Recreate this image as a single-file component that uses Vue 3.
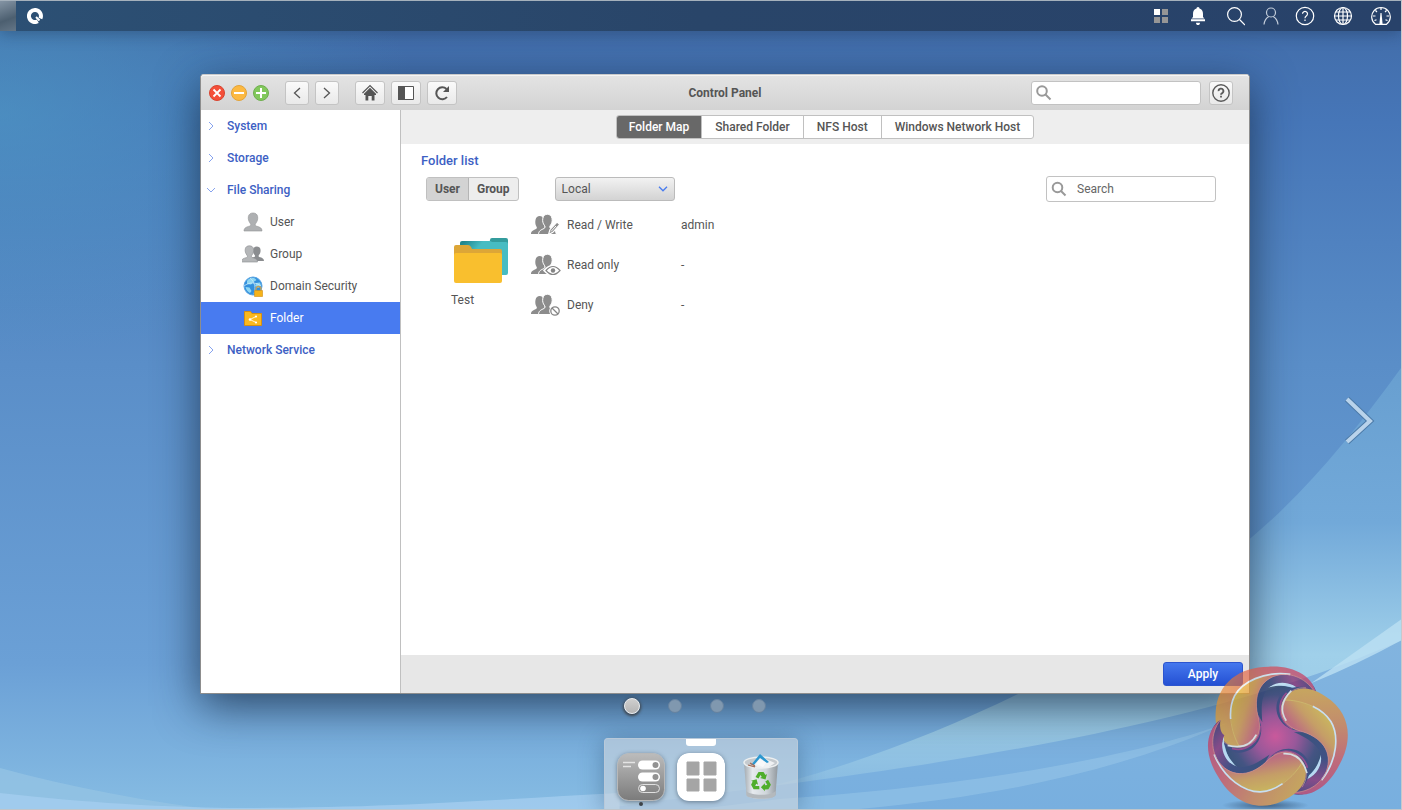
<template>
  <div class="desktop">
    <svg class="wallpaper" viewBox="0 0 1402 810" preserveAspectRatio="none" aria-hidden="true">
      <defs>
        <linearGradient id="sky" x1="0" y1="0" x2="0" y2="1">
          <stop offset="0" stop-color="#416ba6" />
          <stop offset="0.15" stop-color="#4676b8" />
          <stop offset="0.45" stop-color="#5a8ec8" />
          <stop offset="0.82" stop-color="#6ba0d6" />
          <stop offset="1" stop-color="#86bce3" />
        </linearGradient>
        <radialGradient id="glow" cx="0" cy="0.14" r="0.3">
          <stop offset="0" stop-color="#4f9cc6" stop-opacity="0.6" />
          <stop offset="1" stop-color="#4f9cc6" stop-opacity="0" />
        </radialGradient>
        <linearGradient id="sweep" x1="0" y1="0" x2="0" y2="1">
          <stop offset="0" stop-color="#689fd0" />
          <stop offset="0.35" stop-color="#72a9d9" />
          <stop offset="0.65" stop-color="#a0d0ea" />
          <stop offset="0.8" stop-color="#9bcbe6" />
          <stop offset="1" stop-color="#82b6e0" />
        </linearGradient>
        <linearGradient id="lower" x1="0" y1="0" x2="0" y2="1">
          <stop offset="0" stop-color="#82b4df" />
          <stop offset="1" stop-color="#78afdf" />
        </linearGradient>
      </defs>
      <rect width="1402" height="810" fill="url(#sky)" />
      <rect width="1402" height="810" fill="url(#glow)" />
      <path d="M1402 368C1350 440 1300 500 1240 548C1150 640 950 740 780 785L600 810H1402Z" fill="url(#sweep)" />
      <path d="M1402 641C1300 686 1150 738 780 786L600 810H1402Z" fill="url(#lower)" />
      <path d="M1402 620L1312 684Q1360 664 1402 641Z" fill="#bce0f2" opacity="0.8" />
      <path d="M1230 723C1150 752 1000 785 780 800L700 810H860C1000 797 1120 772 1230 723Z" fill="#a9d4ee" opacity="0.35" />
      <path d="M0 769C70 788 150 803 210 810H0Z" fill="#94c3e4" opacity="0.8" />
      <path d="M0 794C90 804 160 808 230 809C400 809 500 800 620 794V810H0Z" fill="#a4cdef" opacity="0.8" />
    </svg>

    <header class="topbar">
      <button class="show-desktop" aria-label="Show desktop"></button>
      <button class="bar-btn brand" aria-label="Main menu">
        <svg width="16" height="16" viewBox="0 0 16 16">
          <path d="M10.800 13.300A6 6 0 1 1 13.400 10.500" fill="none" stroke="#fff" stroke-width="4" />
          <path d="M9 9l3.500 3.500" stroke="#fff" stroke-width="2" />
        </svg>
      </button>
      <nav class="tray">
        <button class="bar-btn" aria-label="Dashboard">
          <svg width="16" height="16" viewBox="0 0 16 16">
            <path d="M1 1h6v6H1z" fill="#fff" />
            <path d="M9 1h6v6H9zM1 9h6v6H1zM9 9h6v6H9z" fill="#969696" />
          </svg>
        </button>
        <button class="bar-btn" aria-label="Notifications">
          <svg width="22" height="20" viewBox="0 0 22 20">
            <path d="M11 1a1.500 1.500 0 0 1 1.500 1.600C15 3.300 16 5.500 16 8v3l1.500 1.500h-13L6 11V8c0-2.500 1-4.700 3.500-5.400A1.500 1.500 0 0 1 11 1zM4 13.300h14v2H4zM9 16.700h4c0 1.500-.8 2.300-2 2.300s-2-.8-2-2.300z" fill="#fff" />
          </svg>
        </button>
        <button class="bar-btn" aria-label="Search">
          <svg class="line" width="18" height="20" viewBox="0 0 18 20">
            <circle cx="7.500" cy="8.500" r="6.900" />
            <path d="M12.500 13.500l5.500 5.500" />
          </svg>
        </button>
        <button class="bar-btn" aria-label="Account">
          <svg class="line soft" width="16" height="20" viewBox="0 0 16 20">
            <circle cx="8" cy="6.500" r="4.500" />
            <path d="M1 18.500c.5-4 2-6.500 4.800-8M15 18.500c-.5-4-2-6.500-4.800-8" />
          </svg>
        </button>
        <button class="bar-btn" aria-label="Help">
          <svg class="line" width="20" height="20" viewBox="0 0 20 20">
            <circle cx="10" cy="10" r="8.700" />
            <path d="M7.500 7.800a2.500 2.500 0 1 1 3.800 2.200c-.9.600-1.300 1-1.300 2.200M10 13.600V15" />
          </svg>
        </button>
        <button class="bar-btn" aria-label="Language">
          <svg class="line" width="20" height="20" viewBox="0 0 20 20">
            <circle cx="10" cy="10" r="8.500" />
            <ellipse cx="10" cy="10" rx="4.500" ry="8.500" />
            <path d="M10 1.500v17M1.500 10h17M3 6h14M3 14h14" />
          </svg>
        </button>
        <button class="bar-btn" aria-label="Resource monitor">
          <svg class="line" width="20" height="20" viewBox="0 0 20 20">
            <path d="M4.500 18.300a9.300 9.300 0 1 1 11 0zM10 2v2M4.500 4.500L6 6M15.500 4.500L14 6M2 10h2.500M15.500 10H18M3.500 14.500l2-.8M16.500 14.500l-2-.8" />
            <path d="M9.500 7h1l1.100 11H8.400z" fill="#fff" stroke="none" />
          </svg>
        </button>
      </nav>
    </header>

    <main class="stage">
      <section class="window">
        <header class="titlebar">
          <div class="title-left">
            <div class="lights">
              <button class="light" aria-label="Close">
                <svg width="16" height="16" viewBox="0 0 16 16">
                  <circle cx="8" cy="8" r="7.500" fill="#f4503a" stroke="#d84430" />
                  <path d="M4.500 4.500l7 7M11.500 4.500l-7 7" stroke="#fff" stroke-width="1.800" />
                </svg>
              </button>
              <button class="light" aria-label="Minimize">
                <svg width="16" height="16" viewBox="0 0 16 16">
                  <circle cx="8" cy="8" r="7.500" fill="#fcb942" stroke="#e2a33a" />
                  <path d="M3 8h10" stroke="#fff" stroke-width="2" />
                </svg>
              </button>
              <button class="light" aria-label="Maximize">
                <svg width="16" height="16" viewBox="0 0 16 16">
                  <circle cx="8" cy="8" r="7.500" fill="#82c85c" stroke="#6fae4f" />
                  <path d="M3 8h10M8 3v10" stroke="#fff" stroke-width="2" />
                </svg>
              </button>
            </div>
            <div class="tools">
              <button class="tool narrow" aria-label="Back">
                <svg width="16" height="16" viewBox="0 0 16 16"><path d="M11 3L5.500 8l5.500 5" class="chev" /></svg>
              </button>
              <button class="tool narrow" aria-label="Forward">
                <svg width="16" height="16" viewBox="0 0 16 16"><path d="M5 3l5.500 5L5 13" class="chev" /></svg>
              </button>
            </div>
            <div class="tools">
              <button class="tool" aria-label="Home">
                <svg width="18" height="18" viewBox="0 0 18 18">
                  <path d="M1.500 9L9 1.500 16.500 9" fill="none" stroke="#555" stroke-width="1.200" />
                  <path d="M9 3.700l6 6V11h-1.500v5.500h-2.800V12H7.300v4.500H4.500V11H3V9.700z" fill="#555" />
                </svg>
              </button>
              <button class="tool" aria-label="Toggle sidebar">
                <svg width="16" height="14" viewBox="0 0 16 14">
                  <path d="M.5.5h15v13H.5z" fill="#fff" stroke="#555" />
                  <path d="M0 0h7v14H0z" fill="#555" />
                </svg>
              </button>
              <button class="tool" aria-label="Reload">
                <svg width="18" height="18" viewBox="0 0 18 18">
                  <path d="M14 13A6 6 0 1 1 13.500 5" fill="none" stroke="#555" stroke-width="2" />
                  <path d="M16 2v6h-6z" fill="#555" />
                </svg>
              </button>
            </div>
          </div>
          <h1 class="window-title">Control Panel</h1>
          <div class="title-right">
            <label class="search">
              <svg width="16" height="16" viewBox="0 0 16 16"><circle cx="6" cy="6" r="4.800" /><path d="M9.500 9.500l5 5" /></svg>
              <input type="text" aria-label="Search settings" />
            </label>
            <button class="tool narrow" aria-label="Help">
              <svg width="20" height="20" viewBox="0 0 20 20" fill="none" stroke="#5a5a5a">
                <circle cx="10" cy="10" r="8.200" stroke-width="1.400" />
                <path d="M7.600 8.100a2.400 2.400 0 1 1 3.600 2c-.8.400-1.200.8-1.200 1.700M10 12.800v1.700" stroke-width="1.800" />
              </svg>
            </button>
          </div>
        </header>

        <div class="window-body">
          <aside class="sidebar">
            <template v-for="group in menu" :key="group.name">
              <button class="group" @click="group.open = !group.open">
                <svg width="10" height="10" viewBox="0 0 10 10">
                  <path :d="group.open ? 'M1 3l4 4 4-4' : 'M3 1l4 4-4 4'" />
                </svg>
                {{ group.name }}
              </button>
              <template v-if="group.open">
                <a
                  v-for="item in group.items"
                  :key="item.name"
                  href="#"
                  class="item"
                  :class="{ active: item.name === current }"
                  @click.prevent="current = item.name"
                >
                  <svg v-if="item.icon === 'user'" width="22" height="22" viewBox="0 0 22 22">
                    <path :d="person" fill="#aeb0b2" stroke="#929496" stroke-width="0.600" />
                  </svg>
                  <svg v-else-if="item.icon === 'group'" width="22" height="22" viewBox="0 0 22 22">
                    <path :d="person" transform="translate(6 2) scale(.8)" fill="#8b8d90" />
                    <path :d="person" transform="translate(-2.500 1) scale(.9)" fill="#b4b6b8" stroke="#8e9092" stroke-width="0.700" />
                  </svg>
                  <svg v-else-if="item.icon === 'globe'" width="22" height="22" viewBox="0 0 22 22">
                    <circle cx="11" cy="11" r="9" fill="#3390de" stroke="#5aa5e2" />
                    <path d="M5 6c2-3 5-3.500 8-2.500l1.500 1.500-3 2-2.500 2.500-4-.5zM14 8l4-.5 1 3-3 2.500-3-2zM3.500 12l4 .5 2 3.500-1.500 2c-2-1-4-3-4.500-6z" fill="#8fd6f2" />
                    <path d="M2 11c5-4 12-4 17 0M8 3c5 4 6 10 4 16" fill="none" stroke="#d5effa" stroke-width="0.700" />
                    <path d="M14 16v-2a2.500 2.500 0 0 1 5 0v2" fill="none" stroke="#bfa05c" stroke-width="1.300" />
                    <path d="M12.500 15.500h8v6h-8z" fill="#f6b319" stroke="#d18d10" stroke-width="0.600" />
                  </svg>
                  <svg v-else width="22" height="22" viewBox="0 0 22 22">
                    <path d="M2.500 4.500h6l1.500 2h9.500v12h-17z" fill="#fbb81f" stroke="#d58f13" />
                    <path d="M14 9.500l-6 3 6 3" fill="none" stroke="#fff" stroke-width="0.800" />
                    <circle cx="14" cy="9.500" r="1.100" fill="#fff" /><circle cx="8" cy="12.500" r="1.300" fill="#fff" /><circle cx="14" cy="15.500" r="1.100" fill="#fff" />
                  </svg>
                  {{ item.name }}
                </a>
              </template>
            </template>
          </aside>

          <div class="panel">
            <nav class="tabs">
              <div class="tab-group">
                <button v-for="t in tabs" :key="t" class="tab" :class="{ active: t === tab }" @click="tab = t">{{ t }}</button>
              </div>
            </nav>

            <div class="content">
              <h2 class="heading">Folder list</h2>
              <div class="toolbar">
                <div class="toggle">
                  <button :class="{ active: scope === 'User' }" @click="scope = 'User'">User</button>
                  <button :class="{ active: scope === 'Group' }" @click="scope = 'Group'">Group</button>
                </div>
                <div class="select">
                  <select v-model="domain" aria-label="Domain">
                    <option>Local</option>
                  </select>
                  <svg width="10" height="6" viewBox="0 0 10 6"><path d="M1 .8l4 4 4-4" /></svg>
                </div>
                <label class="search filter">
                  <svg width="16" height="16" viewBox="0 0 16 16"><circle cx="6.500" cy="6.500" r="4.800" /><path d="M10 10l4.500 4.500" /></svg>
                  <input type="text" placeholder="Search" aria-label="Search" />
                </label>
              </div>

              <div class="folder-row">
                <figure class="folder">
                  <svg width="56" height="46" viewBox="0 0 56 46">
                    <defs>
                      <linearGradient id="backFolder" x1="0" y1="0" x2="0.800" y2="0.500">
                        <stop offset="0.100" stop-color="#22878f" />
                        <stop offset="0.450" stop-color="#47bcc2" />
                      </linearGradient>
                    </defs>
                    <path d="M37 3q0-2 2-2h14q2 0 2 2v8H35z" fill="#339c9d" />
                    <path d="M7 6q0-2 2-2h27q2 0 3 1h14q2 0 2 2v29q0 2-2 2H9q-2 0-2-2z" fill="url(#backFolder)" />
                    <path d="M1 10q0-2 2-2h12q2 0 3 2l1 2h28q2 0 2 2v12H1z" fill="#dda637" />
                    <path d="M1 18q0-2 2-2h44q2 0 2 2v26q0 2-2 2H3q-2 0-2-2z" fill="#f9bf2e" />
                  </svg>
                  <figcaption>Test</figcaption>
                </figure>
                <table class="rights">
                  <tbody>
                    <tr v-for="r in rights" :key="r.label">
                      <td class="pic">
                        <svg width="30" height="22" viewBox="0 0 30 22">
                          <path d="M0 20c0-3 2-3.500 5-5 1-.5 1.200-1.500.4-2.500C4.300 10.500 4 8 4.600 5.500 5.200 1.800 9 1 11.500 3L15 20z" fill="#8c8c8c" />
                          <path d="M7.500 20.500c.2-4 2.500-4.500 5.500-6 1.200-.6 1.400-2 .5-3-1.600-2-2.200-4.500-1.700-7C12.600-1.200 20.200-1.200 21 4.500c.4 2.500 0 5-1.700 7-.9 1-.7 2.400.5 3 3 1.500 5.200 2 5.400 6z" fill="#8c8c8c" stroke="#fff" />
                          <g v-if="r.icon === 'pen'">
                            <path d="M17.500 20.500l1.500-5 7-7.500 2.800 2.500-7 7.800z" fill="#8c8c8c" stroke="#fff" stroke-width="1.200" />
                            <path d="M20 17.500l5-5.500" stroke="#fff" />
                          </g>
                          <g v-else-if="r.icon === 'eye'">
                            <path d="M14 16.500q7.500-8 15 0q-7.500 8-15 0z" fill="#fff" stroke="#fff" stroke-width="3" />
                            <path d="M15 16.500q7-8 14 0q-7 8-14 0z" fill="#fff" stroke="#858585" stroke-width="1.200" />
                            <circle cx="22" cy="16.500" r="2.200" fill="#858585" />
                          </g>
                          <g v-else>
                            <circle cx="24" cy="17" r="4.300" fill="#fff" stroke="#fff" stroke-width="3" />
                            <circle cx="24" cy="17" r="4.200" fill="#fff" stroke="#858585" stroke-width="1.300" />
                            <path d="M21 14l6 6" stroke="#858585" stroke-width="1.300" />
                          </g>
                        </svg>
                      </td>
                      <th scope="row">{{ r.label }}</th>
                      <td>{{ r.value }}</td>
                    </tr>
                  </tbody>
                </table>
              </div>
            </div>

            <footer class="actions">
              <button class="apply">Apply</button>
            </footer>
          </div>
        </div>
      </section>
    </main>

    <nav class="pager">
      <button v-for="n in 4" :key="n" :class="{ active: n === page }" :aria-label="'Desktop ' + n" @click="page = n"></button>
    </nav>

    <footer class="dock">
      <button class="dock-item running" aria-label="Control Panel">
        <svg width="48" height="48" viewBox="0 0 48 48">
          <defs>
            <linearGradient id="panelFill" x1="0" y1="0" x2="0" y2="1">
              <stop offset="0" stop-color="#bcbcbc" />
              <stop offset="1" stop-color="#7b7b7b" />
            </linearGradient>
          </defs>
          <rect x="0.500" y="0.500" width="47" height="47" rx="11" fill="url(#panelFill)" stroke="#b8b8b8" />
          <path d="M6 9.500h12M6 13.500h8" stroke="#e4e4e4" stroke-width="1.600" />
          <rect x="21" y="7.500" width="22" height="9" rx="4.500" fill="#fff" />
          <rect x="21" y="19.500" width="22" height="9" rx="4.500" fill="#fff" />
          <rect x="21.500" y="31.500" width="21" height="8" rx="4" fill="none" stroke="#e0e0e0" />
          <circle cx="38.500" cy="12" r="3" fill="#929292" />
          <circle cx="38.500" cy="24" r="3" fill="#929292" />
          <circle cx="26" cy="35.500" r="2.800" fill="#fff" />
        </svg>
      </button>
      <button class="dock-item current" aria-label="Applications">
        <svg width="48" height="48" viewBox="0 0 48 48">
          <rect width="48" height="48" rx="12" fill="#fff" />
          <path d="M10 9h12v13H10zM27 9h12v13H27zM10 26h12v12H10zM27 26h12v12H27z" fill="#a5a5a5" stroke="#a5a5a5" stroke-linejoin="round" />
        </svg>
      </button>
      <button class="dock-item" aria-label="Recycle bin">
        <svg width="48" height="48" viewBox="0 0 48 48">
          <defs>
            <linearGradient id="binFill">
              <stop offset="0" stop-color="#a2a7ab" />
              <stop offset="0.250" stop-color="#eceef0" />
              <stop offset="0.650" stop-color="#d4d8db" />
              <stop offset="1" stop-color="#8d9296" />
            </linearGradient>
          </defs>
          <path d="M7 9L9.500 42c1 5 28 5 29 0L41 9z" fill="url(#binFill)" opacity="0.900" />
          <path d="M9.300 38l.2 4c1 5 28 5 29 0l.2-4c-4 5-25 5-29.400 0z" fill="#b4b9bd" />
          <ellipse cx="24" cy="9.500" rx="17" ry="5.500" fill="#c5cace" stroke="#eceff0" stroke-width="1.500" />
          <path d="M14 12l9-10 8 5 7 3-6 4-8 1z" fill="#eff1f3" />
          <path d="M14 12L23 1l9 8-2 1-7-5-6 7z" fill="#2c97cf" />
          <path d="M19 11l4-5 6 4-3 4z" fill="#f8f9fa" />
          <path d="M11 12l7 2M13 10l5 3" stroke="#a36a56" stroke-width="1.200" />
          <g fill="#4fae2b">
            <path :d="recycle" />
            <path :d="recycle" transform="rotate(120 24 29)" />
            <path :d="recycle" transform="rotate(240 24 29)" />
          </g>
        </svg>
      </button>
    </footer>

    <button class="next-page" aria-label="Next desktop">
      <svg width="34" height="52" viewBox="0 0 34 52">
        <path d="M6 4l23 22L6 47" class="edge" />
        <path d="M6 4l23 22L6 47" class="face" />
      </svg>
    </button>

    <svg class="emblem" width="148" height="146" viewBox="155 40 444 438" aria-hidden="true">
      <defs>
        <radialGradient id="core" gradientUnits="userSpaceOnUse" cx="375" cy="257" r="156">
          <stop offset="0" stop-color="#f0307c" />
          <stop offset="0.400" stop-color="#a82e79" />
          <stop offset="0.800" stop-color="#2b2857" />
          <stop offset="1" stop-color="#182749" />
        </radialGradient>
        <linearGradient id="arm" gradientUnits="userSpaceOnUse" x1="200" y1="240" x2="470" y2="70">
          <stop offset="0" stop-color="#eaa022" />
          <stop offset="0.350" stop-color="#e57a36" />
          <stop offset="0.700" stop-color="#e0484c" />
          <stop offset="1" stop-color="#c8305a" />
        </linearGradient>
        <linearGradient id="armInner" gradientUnits="userSpaceOnUse" x1="245" y1="170" x2="330" y2="200">
          <stop offset="0" stop-color="#efb422" />
          <stop offset="0.450" stop-color="#e9952d" />
          <stop offset="1" stop-color="#dc4c54" />
        </linearGradient>
        <linearGradient id="ring" gradientUnits="userSpaceOnUse" x1="320" y1="180" x2="500" y2="110">
          <stop offset="0" stop-color="#1d2450" />
          <stop offset="0.350" stop-color="#23245a" />
          <stop offset="0.700" stop-color="#8c1c61" />
          <stop offset="1" stop-color="#2a2055" />
        </linearGradient>
        <radialGradient id="ground">
          <stop offset="0" stop-color="#243d5c" />
          <stop offset="1" stop-color="#243d5c" stop-opacity="0" />
        </radialGradient>
      </defs>
      <ellipse cx="345" cy="464" rx="130" ry="18" fill="url(#ground)" />
      <circle cx="375" cy="257" r="154" fill="url(#core)" />
      <g v-for="angle in [0, 120, 240]" :key="angle" :transform="`rotate(${angle} 375 257)`">
        <path d="M350 112C385 82 430 92 452 124C425 104 390 100 350 112Z" fill="#d5edfa" />
        <path d="M322 190C300 110 345 68 400 66C460 66 500 100 500 139C478 122 465 122 454 126C432 92 375 84 349 118C334 140 332 165 336 215Z" fill="url(#ring)" />
        <path d="M325 205C348 250 318 306 265 306C240 304 216 285 204 256L265 288Z" fill="#25245a" />
        <path d="M330 225C330 275 285 305 245 293" fill="none" stroke="#a31f68" stroke-width="5" />
        <path d="M500 139C480 90 430 66 390 72C330 82 305 135 325 205C337 255 305 290 265 290C220 288 192 250 196 185C200 95 270 48 355 48C430 44 492 76 500 139Z" fill="url(#arm)" />
        <path d="M420 71C350 60 285 85 255 130C230 175 245 245 268 289C312 288 335 255 325 205C305 135 330 82 390 72Z" fill="url(#armInner)" />
        <path d="M420 71C340 60 275 95 253 135C243 155 239 180 241 205" fill="none" stroke="#eff6fa" stroke-width="5" />
        <path d="M241 205C245 240 255 268 268 289" fill="none" stroke="#f5c53c" stroke-width="2" />
        <path d="M500 139C480 90 430 66 390 72C330 82 305 135 325 205C337 255 305 290 265 290C235 288 215 275 203 250" fill="none" stroke="#f3806a" stroke-width="2" />
        <path d="M232 284Q294 300 318 252" fill="none" stroke="#fdf4e4" stroke-width="5" />
      </g>
    </svg>
  </div>
</template>

<script setup>
import { ref } from 'vue'

const tabs = ['Folder Map', 'Shared Folder', 'NFS Host', 'Windows Network Host']
const tab = ref('Folder Map')
const current = ref('Folder')
const scope = ref('User')
const domain = ref('Local')
const page = ref(1)

const menu = ref([
  { name: 'System', open: false, items: [] },
  { name: 'Storage', open: false, items: [] },
  {
    name: 'File Sharing',
    open: true,
    items: [
      { name: 'User', icon: 'user' },
      { name: 'Group', icon: 'group' },
      { name: 'Domain Security', icon: 'globe' },
      { name: 'Folder', icon: 'folder' }
    ]
  },
  { name: 'Network Service', open: false, items: [] }
])

const rights = [
  { label: 'Read / Write', value: 'admin', icon: 'pen' },
  { label: 'Read only', value: '-', icon: 'eye' },
  { label: 'Deny', value: '-', icon: 'deny' }
]

// shared icon shapes
const person = 'M2 20c0-3 2-4 6-5 1-.5 1-1.500.3-2.500C6.500 10 6 8 6.400 5.500 7 .8 15 .8 15.600 5.500c.4 2.500-.1 4.500-1.900 7-.7 1-.7 2 .3 2.500 4 1 6 2 6 5z'
const recycle = 'M18.500 24l3-5h5l2 3 1.500-1-1.500 5.500-5.500-1.500 1.800-1-1.300-2-2 3.500z'
</script>

<style>
body {
  margin: 0;
}
</style>

<style scoped>
.desktop {
  position: relative;
  display: flex;
  flex-direction: column;
  min-height: 100vh;
  box-sizing: border-box;
  border-top: 1px solid #a5b1bc;
  border-right: 1px solid #c5c9cd;
  border-bottom: 1px solid #bfc5ca;
  overflow: hidden;
  font-family: Roboto, 'Liberation Sans', sans-serif;
  font-size: 12px;
  line-height: 16px;
  color: #555;
}

.desktop * {
  box-sizing: border-box;
}

button,
input,
select {
  font: inherit;
  color: inherit;
}

button {
  padding: 0;
  border: 0;
  background: none;
  cursor: pointer;
}

svg {
  display: block;
  flex: none;
}

.wallpaper {
  position: absolute;
  inset: 0;
  width: 100%;
  height: 100%;
}

/* top bar */
.topbar {
  position: relative;
  display: flex;
  align-items: center;
  height: 30px;
  padding-right: 10px;
  background: linear-gradient(90deg, #2c5074, #294569 50%, #28426a);
  box-shadow: 0 2px 16px rgba(20, 40, 70, 0.4);
}

.show-desktop {
  width: 16px;
  height: 30px;
  background: linear-gradient(160deg, #8494a4, #4c5f70 60%, #647687);
}

.brand {
  margin-left: 11px;
}

.tray {
  display: flex;
  align-items: center;
  gap: 18px;
  margin-left: auto;
}

.tray .bar-btn:nth-child(4) {
  margin-right: -2px;
}

.line {
  fill: none;
  stroke: #fff;
  stroke-width: 1.2;
}

.soft {
  stroke: #c3cdda;
}

/* window */
.stage {
  position: relative;
  display: flex;
  flex: 1;
  padding: 43px 151px 0 200px;
}

.window {
  display: flex;
  flex: 1;
  flex-direction: column;
  min-width: 0;
  border: 1px solid #8d8d8d;
  border-top-color: #c9c9c9;
  border-radius: 4px 4px 1px 1px;
  background: #fff;
  box-shadow: 0 12px 44px rgba(20, 40, 65, 0.75);
}

.titlebar {
  display: grid;
  grid-template-columns: 1fr auto 1fr;
  align-items: center;
  height: 35px;
  padding: 0 16px 0 8px;
  border-top: 1px solid #f4f4f4;
  border-radius: 3px 3px 0 0;
  background: linear-gradient(#e3e3e3, #d3d3d3);
}

.title-left,
.title-right,
.lights,
.tools {
  display: flex;
  align-items: center;
}

.title-left {
  gap: 16px;
}

.lights,
.tools {
  gap: 6px;
}

.title-right {
  justify-content: flex-end;
  gap: 8px;
}

.window-title {
  margin: 0 0 0 8px;
  font-size: 12px;
  font-weight: 700;
}

.tool {
  display: flex;
  align-items: center;
  justify-content: center;
  width: 30px;
  height: 24px;
  border: 1px solid #c4c4c4;
  border-radius: 3px;
  background: linear-gradient(#fafafa, #e9e9e9);
}

.narrow {
  width: 24px;
}

.chev {
  fill: none;
  stroke: #555;
  stroke-width: 1.3;
}

.search {
  display: flex;
  align-items: center;
  gap: 10px;
  width: 170px;
  height: 24px;
  padding: 0 4px;
  border: 1px solid #c2c2c2;
  border-radius: 3px;
  background: #fff;
}

.search svg {
  fill: none;
  stroke: #999;
  stroke-width: 2;
}

.search input {
  flex: 1;
  min-width: 0;
  padding: 0;
  border: 0;
  outline: 0;
  background: none;
}

.search input::placeholder {
  color: #666;
  opacity: 1;
}

.window-body {
  display: flex;
  flex: 1;
}

/* sidebar */
.sidebar {
  width: 200px;
  border-right: 1px solid #c0c0c0;
}

.group {
  display: flex;
  align-items: center;
  gap: 11px;
  width: 100%;
  height: 32px;
  padding-left: 5px;
  color: #3d5fc4;
  font-weight: 500;
}

.group svg {
  fill: none;
  stroke: #87a3ee;
  stroke-width: 1;
}

.item {
  display: flex;
  align-items: center;
  gap: 6px;
  height: 32px;
  padding-left: 41px;
  color: #555;
  text-decoration: none;
}

.item.active {
  background: #487bf0;
  color: #fff;
}

/* right side */
.panel {
  display: flex;
  flex: 1;
  flex-direction: column;
  min-width: 0;
}

.tabs {
  display: flex;
  align-items: center;
  justify-content: center;
  height: 34px;
  background: #eee;
}

.tab-group,
.toggle {
  display: flex;
  height: 24px;
  border: 1px solid #c0c0c0;
  border-radius: 3px;
  overflow: hidden;
  background: #fff;
}

.tab {
  padding: 0 13px;
  border-left: 1px solid #c0c0c0;
  font-weight: 500;
}

.tab:first-child {
  padding: 0 12px;
  border-left: 0;
}

.tab.active {
  background: #686868;
  color: #fff;
}

.content {
  flex: 1;
  padding: 9px 33px 0 20px;
}

.heading {
  margin: 0 0 7px;
  color: #3d5fc4;
  font-size: 13px;
  font-weight: 500;
  line-height: 16px;
}

.toolbar {
  display: flex;
  align-items: center;
  height: 26px;
  padding-left: 5px;
}

.toggle {
  background: #ededed;
}

.toggle button {
  padding: 0 8px;
  font-weight: 700;
}

.toggle .active {
  border-right: 1px solid #b5b5b5;
  background: #d3d3d3;
}

.select {
  position: relative;
  width: 120px;
  margin-left: 36px;
}

.select select {
  display: block;
  width: 100%;
  height: 24px;
  padding: 0 24px 0 6px;
  border: 1px solid #bbb;
  border-radius: 3px;
  appearance: none;
  background: linear-gradient(#f2f2f2, #d3d3d3);
}

.select svg {
  position: absolute;
  top: 9px;
  right: 7px;
  fill: none;
  stroke: #487bf0;
  stroke-width: 1.3;
  pointer-events: none;
}

.filter {
  height: 26px;
  margin-left: auto;
}

.folder-row {
  display: flex;
  align-items: flex-start;
  padding-top: 3px;
}

.folder {
  width: 110px;
  margin: 0;
  padding: 32px 0 0 32px;
}

.folder figcaption {
  margin: 9px 0 0 -2px;
}

.rights {
  border-collapse: collapse;
}

.rights td,
.rights th {
  height: 40px;
  padding: 0;
  font-weight: 400;
  text-align: left;
}

.rights .pic {
  width: 36px;
}

.rights th {
  width: 114px;
}

.actions {
  display: flex;
  align-items: center;
  justify-content: flex-end;
  height: 38px;
  padding-right: 6px;
  background: #e7e7e7;
}

.apply {
  width: 80px;
  height: 24px;
  border: 1px solid #2c55cf;
  border-radius: 3px;
  background: linear-gradient(#4578ee, #2450d3);
  color: #fff;
  font-weight: 500;
}

/* desktop switcher */
.pager {
  position: relative;
  display: flex;
  align-items: center;
  justify-content: center;
  gap: 28px;
  height: 24px;
  margin-bottom: 20px;
  padding-right: 12px;
}

.pager button {
  width: 14px;
  height: 14px;
  border: 1px solid #66829f;
  border-radius: 50%;
  background: #8098af;
}

.pager .active {
  width: 16px;
  height: 16px;
  border: 1px solid #eee;
  background: linear-gradient(#cfcfcf, #b4b4b4);
  box-shadow: 0 1px 3px 1px #3d4247;
}

.dock {
  position: relative;
  display: flex;
  align-self: center;
  gap: 12px;
  height: 71px;
  padding: 14px 12px 0;
  border: 1px solid #b9c9d9;
  border-bottom: 0;
  border-radius: 4px 4px 0 0;
  background: rgba(205, 213, 222, 0.6);
  box-shadow: 0 2px 24px rgba(35, 65, 95, 0.4);
}

.dock-item {
  position: relative;
  width: 48px;
  height: 48px;
}

.running svg,
.current svg {
  border-radius: 12px;
  box-shadow: 0 1px 4px rgba(60, 75, 90, 0.6);
}

.running::after {
  position: absolute;
  bottom: -5px;
  left: 22px;
  width: 4px;
  height: 4px;
  border-radius: 50%;
  background: #3e4348;
  content: '';
}

.current::before {
  position: absolute;
  top: -14px;
  left: 9px;
  width: 30px;
  height: 7px;
  border-radius: 0 0 3px 3px;
  background: #fff;
  content: '';
}

.next-page {
  position: absolute;
  top: 394px;
  right: 26px;
}

.next-page path {
  fill: none;
}

.edge {
  stroke: #4c7ba9;
  stroke-width: 6;
}

.face {
  stroke: #b9d3eb;
  stroke-width: 4;
}

.emblem {
  position: absolute;
  right: 51px;
  bottom: -1px;
  opacity: 0.67;
  pointer-events: none;
}
</style>
